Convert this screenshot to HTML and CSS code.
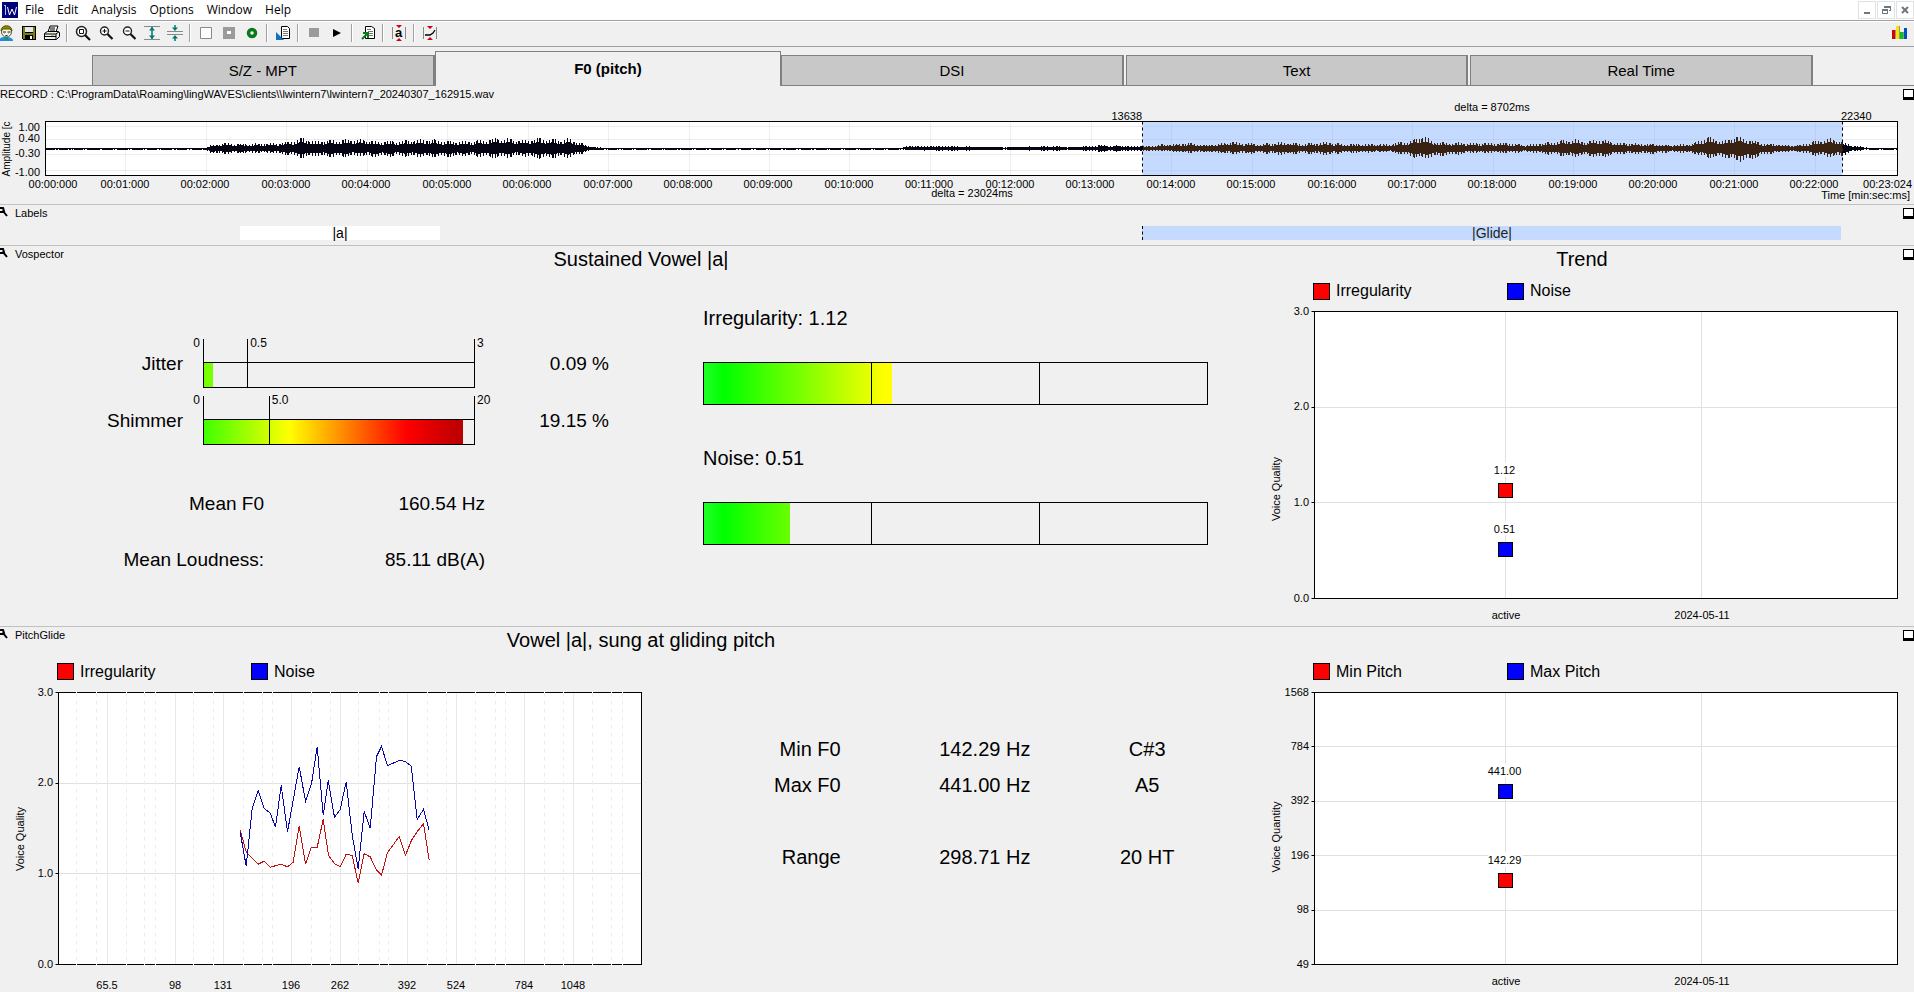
FILE: index.html
```html
<!DOCTYPE html>
<html lang="en">
<head>
<meta charset="utf-8">
<title>lingWAVES</title>
<link rel="stylesheet" href="styles.css">
</head>
<body>
<div class="app">
  <header class="menubar">
    <svg class="logo" width="16" height="16" viewBox="0 0 16 16" aria-label="lingWAVES" shape-rendering="crispEdges"><rect width="16" height="16" fill="#000078"/><path d="M3 3v10M2 3h2" stroke="#8fd0ff" fill="none"/><path d="M5.500 5l2 8 2.500-6 2.500 6 2-8" stroke="#fff" fill="none" shape-rendering="auto"/></svg>
    <nav class="menus">
      <button>File</button><button>Edit</button><button>Analysis</button><button>Options</button><button>Window</button><button>Help</button>
    </nav>
    <div class="window-buttons">
      <button aria-label="Minimize"><svg width="10" height="10" viewBox="0 0 10 10"><path d="M2 7h6v2H2z" fill="#6d7780"/></svg></button>
      <button aria-label="Restore"><svg width="10" height="10" viewBox="0 0 10 10" fill="none" stroke="#6d7780" shape-rendering="crispEdges"><path d="M3.500 3V1.500h6v4H8M3 2.500h6M1.500 4.500h5v4h-5zM1 5.500h6"/></svg></button>
      <button aria-label="Close"><svg width="10" height="10" viewBox="0 0 10 10"><path d="M2 2l6 6M8 2l-6 6" stroke="#6d7780" stroke-width="2"/></svg></button>
    </div>
  </header>

  <div class="toolbar" role="toolbar">
    <button class="first" aria-label="Client"><svg width="16" height="16" viewBox="0 0 16 16"><path d="M1 16c0-3 3-4 7-4s7 1 7 4z" fill="#1b8fd8"/><path d="M7 13h3l-1 3z" fill="#0aa02c"/><circle cx="8.500" cy="7" r="5" fill="#fff3d0" stroke="#555" /><path d="M3 6c0-7 11-7 11 0l-2-2H5z" fill="#8a8a00" stroke="#555500"/><path d="M5 7h3M9.500 7h3M7.500 10.500h2" stroke="#123" /><path d="M6 8h1M10 8h1" stroke="#2aa0e0"/></svg></button>
    <button aria-label="Save"><svg width="16" height="16" viewBox="0 0 16 16" shape-rendering="crispEdges"><path d="M1 1h14v14H2l-1-1z" fill="#000"/><path d="M2 2h2v6h8V2h2v12H2z" fill="#7b7b18"/><path d="M4 2h8v5H4z" fill="#e8e8e8"/><path d="M4 10h8v4H4z" fill="#000"/><path d="M9 11h2v3H9z" fill="#fff"/></svg></button>
    <button aria-label="Print"><svg width="18" height="16" viewBox="0 0 18 16"><path d="M5 7l2-6h8l-2 6" fill="#fff" stroke="#000"/><path d="M7 3h5M7 5h5" stroke="#000"/><path d="M1.500 8.500l3-2h11l1 1v4l-3 3h-12z" fill="#f0f0f0" stroke="#000"/><path d="M1.500 9h11l3.500-2M2 11.500h11M13 9v5" stroke="#000" fill="none"/><path d="M8 10.500h3" stroke="#e0d000"/></svg></button>
    <span class="sep"></span>
    <button aria-label="Zoom area"><svg width="16" height="16" viewBox="0 0 16 16"><circle cx="6.500" cy="6.500" r="5" fill="#fff" stroke="#222" stroke-width="1.500"/><path d="M4.500 4.500h4v4h-4z" fill="none" stroke="#111"/><path d="M10 10l5 5" stroke="#111" stroke-width="2.200"/></svg></button>
    <button aria-label="Zoom in"><svg width="16" height="16" viewBox="0 0 16 16"><circle cx="6.500" cy="6" r="4" fill="#fff" stroke="#222" stroke-width="1.400"/><path d="M4.500 6h4M6.500 4v4" stroke="#111"/><path d="M9.500 9l5 5" stroke="#111" stroke-width="2.200"/></svg></button>
    <button aria-label="Zoom out"><svg width="16" height="16" viewBox="0 0 16 16"><circle cx="6.500" cy="6" r="4" fill="#fff" stroke="#222" stroke-width="1.400"/><path d="M4.500 6h4" stroke="#111"/><path d="M9.500 9l5 5" stroke="#111" stroke-width="2.200"/></svg></button>
    <button aria-label="Expand amplitude"><svg width="16" height="16" viewBox="0 0 16 16"><path d="M0 1.500h16M0 14.500h16" stroke="#888"/><path d="M8 2v12" stroke="#007870" stroke-width="1.500"/><path d="M8 2l3 3.500H5zM8 14l3-3.500H5z" fill="#007870"/></svg></button>
    <button aria-label="Shrink amplitude"><svg width="16" height="16" viewBox="0 0 16 16"><path d="M0 6.500h16M0 9.500h16" stroke="#888"/><path d="M8 0v4M8 12v4" stroke="#007870" stroke-width="1.500"/><path d="M8 6L5 2.500h6zM8 10l-3 3.500h6z" fill="#007870"/></svg></button>
    <span class="sep"></span>
    <button aria-label="Clear"><svg width="16" height="16" viewBox="0 0 16 16"><path d="M2.500 2.500h11v11h-11z" fill="#fff" stroke="#8a8a8a"/></svg></button>
    <button aria-label="Marker"><svg width="16" height="16" viewBox="0 0 16 16"><path d="M2 2h12v12H2z" fill="#9b9b9b"/><path d="M6 6h4v3H6z" fill="#fff"/></svg></button>
    <button aria-label="Record"><svg width="16" height="16" viewBox="0 0 16 16"><circle cx="8" cy="8" r="3.500" fill="#fff" stroke="#0a7a1c" stroke-width="3.500"/></svg></button>
    <span class="sep"></span>
    <button aria-label="Import report"><svg width="16" height="16" viewBox="0 0 16 16"><path d="M6.500 1.500h6l2 2v10h-8z" fill="#fff" stroke="#000"/><path d="M8 4.500h4M8 6.500h5M8 8.500h5M8 10.500h5" stroke="#777"/><path d="M1 7v8h8z" fill="#1270c0"/></svg></button>
    <span class="sep"></span>
    <button aria-label="Stop"><svg width="16" height="16" viewBox="0 0 16 16"><path d="M3 3h10v9H3z" fill="#9b9b9b"/></svg></button>
    <button aria-label="Play"><svg width="16" height="16" viewBox="0 0 16 16"><path d="M4 4l8 4-8 4z" fill="#000"/></svg></button>
    <span class="sep"></span>
    <button aria-label="Export report"><svg width="16" height="16" viewBox="0 0 16 16"><path d="M5.500 1.500h6l3 2v10h-9z" fill="#fff" stroke="#000"/><path d="M7 4.500h4M8 6.500h5M9 8.500h4M9 10.500h4" stroke="#777"/><path d="M2 14l5-5M3 8h5v5" stroke="#0a7a1c" stroke-width="2" fill="none"/></svg></button>
    <span class="sep"></span>
    <button aria-label="Vowel analysis"><svg width="16" height="16" viewBox="0 0 16 16"><path d="M1.500 2v12M14.500 2v12" stroke="#888"/><path d="M5 0h6L8 3zM5 16h6l-3-3z" fill="#d00018"/><text x="4" y="12" class="icon-letter">a</text></svg></button>
    <span class="sep"></span>
    <button aria-label="Pitch analysis"><svg width="16" height="16" viewBox="0 0 16 16"><path d="M1.500 2v12M14.500 2v12" stroke="#888"/><path d="M5 1h6L8 4zM5 15h6l-3-3z" fill="#d00018"/><path d="M3 10h5l3-2 2-3" stroke="#000" stroke-width="1.300" fill="none"/></svg></button>
    <button class="last" aria-label="Spectrum"><svg width="16" height="16" viewBox="0 0 16 16" shape-rendering="crispEdges"><path d="M1 5h3v9H1z" fill="#d80000"/><path d="M5 1h3v13H5z" fill="#f4e400"/><path d="M9 7h3v7H9z" fill="#00c820"/><path d="M13 3h3v11h-3z" fill="#0050c0"/><path d="M4 5v9M8 1v13M12 7v7" stroke="#333" stroke-opacity=".5"/></svg></button>
  </div>

  <div class="tabs" role="tablist">
    <button role="tab">S/Z - MPT</button>
    <button role="tab" class="active" aria-selected="true">F0 (pitch)</button>
    <button role="tab">DSI</button>
    <button role="tab">Text</button>
    <button role="tab">Real Time</button>
  </div>

  <section class="record">
    <h2 class="path">RECORD : C:\ProgramData\Roaming\lingWAVES\clients\\lwintern7\lwintern7_20240307_162915.wav</h2>
    <button class="maximize" aria-label="Maximize record"></button>
    <div class="wave" id="wave"></div>
  </section>

  <section class="labels">
    <h2 class="pane-name"><svg class="wrench" width="8" height="10" viewBox="0 0 8 10"><path d="M0 1h3l1 3-2 1H0M3 4l4 5" stroke="#000" stroke-width="2" fill="none"/></svg>Labels</h2>
    <button class="maximize" aria-label="Maximize labels"></button>
    <div class="label-track">
      <span class="mark vowel">|a|</span>
      <span class="mark glide">|Glide|</span>
    </div>
  </section>

  <section class="panel vospector">
    <h2 class="pane-name"><svg class="wrench" width="8" height="10" viewBox="0 0 8 10"><path d="M0 1h3l1 3-2 1H0M3 4l4 5" stroke="#000" stroke-width="2" fill="none"/></svg>Vospector</h2>
    <button class="maximize" aria-label="Maximize Vospector"></button>
    <div class="titles"><h3 class="main-title">Sustained Vowel |a|</h3><h3>Trend</h3></div>
    <div class="body">
      <div class="measures">
        <div class="gauge-row">
          <span class="name">Jitter</span>
          <div class="gauge jitter"><span class="zero">0</span><div class="scale"><span class="tick">0.5</span><span class="end">3</span></div><div class="bar"><div class="fill" style="width:3.500%"></div></div></div>
          <span class="value">0.09 %</span>
        </div>
        <div class="gauge-row">
          <span class="name">Shimmer</span>
          <div class="gauge shimmer"><span class="zero">0</span><div class="scale"><span class="tick">5.0</span><span class="end">20</span></div><div class="bar"><div class="fill" style="width:96%"></div></div></div>
          <span class="value">19.15 %</span>
        </div>
        <dl class="means">
          <dt>Mean F0</dt><dd>160.54 Hz</dd>
          <dt>Mean Loudness:</dt><dd>85.11 dB(A)</dd>
        </dl>
      </div>
      <div class="quality">
        <p>Irregularity: 1.12</p>
        <div class="thirds"><div class="fill" style="width:37.400%"></div><i></i><i></i><i></i></div>
        <p>Noise: 0.51</p>
        <div class="thirds"><div class="fill" style="width:17%"></div><i></i><i></i><i></i></div>
      </div>
      <figure class="chart-box">
        <figcaption class="legend trend"><span class="red">Irregularity</span><span class="blue">Noise</span></figcaption>
        <div class="chart" id="trend-quality"></div>
      </figure>
    </div>
  </section>

  <section class="panel pitchglide">
    <h2 class="pane-name"><svg class="wrench" width="8" height="10" viewBox="0 0 8 10"><path d="M0 1h3l1 3-2 1H0M3 4l4 5" stroke="#000" stroke-width="2" fill="none"/></svg>PitchGlide</h2>
    <button class="maximize" aria-label="Maximize PitchGlide"></button>
    <div class="titles"><h3 class="main-title">Vowel |a|, sung at gliding pitch</h3></div>
    <div class="body">
      <figure class="chart-box">
        <figcaption class="legend"><span class="red">Irregularity</span><span class="blue">Noise</span></figcaption>
        <div class="chart" id="glide"></div>
      </figure>
      <div class="range-box">
        <table class="range">
          <tr><th>Min F0</th><td>142.29 Hz</td><td class="note">C#3</td></tr>
          <tr><th>Max F0</th><td>441.00 Hz</td><td class="note">A5</td></tr>
          <tr class="total"><th>Range</th><td>298.71 Hz</td><td class="note">20 HT</td></tr>
        </table>
      </div>
      <figure class="chart-box">
        <figcaption class="legend trend"><span class="red">Min Pitch</span><span class="blue">Max Pitch</span></figcaption>
        <div class="chart" id="trend-pitch"></div>
      </figure>
    </div>
  </section>
</div>
<script src="charts.js"></script>
</body>
</html>
```
FILE: styles.css
```css
* { box-sizing: border-box; }
body { margin: 0; background: #f0f0f0; color: #000; font-family: "Liberation Sans", Arial, sans-serif; font-size: 11px; }
button { font: inherit; color: inherit; border: 0; padding: 0; background: none; }
h2, h3, p, dl, dd, figure { margin: 0; font-weight: normal; }
svg { display: block; }
.app { display: flex; flex-direction: column; min-height: 100vh; overflow: hidden; }

.menubar { display: flex; align-items: center; height: 21px; background: #fff; border-bottom: 1px solid #a0a0a0; padding-left: 2px; }
.menus { display: flex; gap: 13px; margin-left: 7px; font-family: "Open Sans", "Noto Sans", sans-serif; font-size: 12px; line-height: 18px; }
.window-buttons { display: flex; gap: 1px; margin-left: auto; }
.window-buttons button { display: grid; place-items: center; width: 18px; height: 18px; border: 1px solid #e2e2e2; }

.toolbar { display: flex; align-items: center; height: 26px; padding-bottom: 2px; border-top: 1px solid #fff; border-bottom: 1px solid #a0a0a0; }
.toolbar button { display: grid; place-items: center; width: 23px; height: 22px; flex: none; }
.toolbar .first { margin-left: -6px; }
.toolbar .last { margin-left: auto; margin-right: 4px; }
.sep { flex: none; width: 2px; height: 18px; margin: 0 3px; border-left: 1px solid #a0a0a0; border-right: 1px solid #fff; }
.icon-letter { font-size: 13px; font-weight: bold; }

.tabs { display: flex; align-items: flex-end; height: 39px; padding: 0 99px 0 92px; border-bottom: 1px solid #808080; font-size: 15px; }
.tabs button { flex: 343 1 0; height: 30px; background: #c8c8c8; border: 1px solid #808080; border-right-width: 2px; border-bottom: 0; }
.tabs button:nth-child(n + 3) { margin-right: 2px; }
.tabs .active { flex-grow: 348; height: 35px; margin-bottom: -1px; padding-bottom: 2px; background: #f0f0f0; border-right-width: 1px; font-weight: bold; }

.record, .labels, .panel { position: relative; }
.record { height: 118px; }
.path { position: absolute; left: 0; top: 2px; font-size: 11px; line-height: 13px; }
.wave { height: 118px; }
.maximize { position: absolute; right: 0; top: 3px; width: 11px; height: 11px; border: 1px solid #000; border-bottom-width: 3px; background: #fff; }
.wave svg, .chart svg { overflow: visible; }

.labels { height: 41px; border-top: 1px solid #c0c0c0; }
.pane-name { position: absolute; left: 0; top: 2px; display: flex; gap: 7px; font-size: 11px; line-height: 13px; }
.label-track { display: grid; grid-template-columns: 240fr 200fr 702fr 699fr 73fr; padding-top: 21px; font-size: 14px; line-height: 14px; text-align: center; }
.mark { height: 14px; }
.vowel { grid-column: 2; background: #fff; }
.glide { grid-column: 4; background: #c4dbff; border-left: 1px dashed #000; color: #222; }

.panel { display: flex; flex-direction: column; border-top: 1px solid #c0c0c0; }
.vospector { flex: 381 1 0; }
.pitchglide { flex: 366 1 0; }
.titles, .body { display: grid; grid-template-columns: 690fr 560fr 664fr; }
.titles { height: 28px; padding-top: 2px; font-size: 20px; line-height: 22px; text-align: center; }
.titles h3 { font-size: 20px; }
.main-title { grid-column: 1 / 3; padding-left: 32px; }
.body { flex: 1; }

.measures { padding-top: 65px; font-size: 19px; line-height: 24px; }
.gauge-row { display: grid; grid-template-columns: 183fr 20fr 272fr 134fr 81fr; align-items: center; margin-bottom: 8px; }
.name, .value { text-align: right; }
.gauge { grid-column: 3; position: relative; height: 49px; font-size: 12px; line-height: 8px; }
.zero { position: absolute; right: 100%; padding-right: 3px; }
.scale { position: absolute; inset: 0; z-index: 1; border: solid #000; border-width: 0 1px; }
.tick { position: absolute; top: 0; bottom: 0; border-left: 1px solid #000; padding-left: 2px; }
.jitter .tick { left: 16%; }
.shimmer .tick { left: 24%; }
.end { position: absolute; left: 100%; padding-left: 3px; }
.bar { position: absolute; left: 0; right: 0; bottom: 0; height: 26px; border: 1px solid #000; }
.bar .fill { height: 100%; }
.jitter .fill { background: #78ff00; }
.shimmer .fill { background: linear-gradient(90deg, #40ff00, #ff0 33%, #f00 78%, #b80000); }
.means { display: grid; grid-template-columns: 264fr 221fr 205fr; padding-top: 23px; line-height: 56px; text-align: right; }
.means dt { grid-column: 1; }
.means dd { grid-column: 2; }

.quality { padding: 32px 42px 0 13px; font-size: 20px; line-height: 24px; }
.thirds { position: relative; display: grid; grid-template-columns: repeat(3, 1fr); height: 43px; margin: 32px 0 41px; border: 1px solid #000; border-right: 0; }
.thirds i { position: relative; border-right: 1px solid #000; }
.thirds .fill { position: absolute; inset: 0 auto 0 0; background: linear-gradient(90deg, #20ff28, #0f0 20px, #ff0 180px); }

.chart-box { display: flex; flex-direction: column; }
.legend { display: flex; align-items: center; height: 34px; padding-left: 57px; font-size: 16px; line-height: 20px; }
.legend.trend { padding-left: 63px; }
.legend span { display: flex; align-items: center; gap: 6px; width: 194px; }
.legend span::before { content: ""; width: 15px; height: 15px; border: 1px solid #000; background: #f00; }
.legend .blue::before { background: #00f; }
.chart { position: relative; flex: 1; min-height: 200px; }
.chart svg { position: absolute; inset: 0; }

.range-box { padding: 76px 2px 0 0; }
.range { width: 100%; border-collapse: collapse; table-layout: fixed; font-size: 20px; line-height: 36px; text-align: right; }
.range th, .range td { padding: 0; font-weight: normal; text-align: right; }
.range th { width: 27%; }
.range td { width: 34%; }
.range td.note { width: 39%; text-align: center; padding-left: 16px; }
.range .total { line-height: 108px; }

@media (max-width: 1000px) {
  .menus { gap: 8px; }
  .titles, .body { grid-template-columns: 1fr; }
  .titles { height: auto; }
  .main-title { grid-column: 1; }
  .vospector, .pitchglide { flex: none; }
}
```
FILE: charts.js
```js
const NS = "http://www.w3.org/2000/svg";

function canvas(host) {
  host.textContent = "";
  const w = host.clientWidth, h = host.clientHeight;
  const svg = document.createElementNS(NS, "svg");
  svg.setAttribute("width", w);
  svg.setAttribute("height", h);
  svg.setAttribute("font-size", 11);
  host.appendChild(svg);
  const add = (tag, attrs, text) => {
    const el = document.createElementNS(NS, tag);
    for (const key in attrs) el.setAttribute(key, attrs[key]);
    if (text !== undefined) el.textContent = text;
    svg.appendChild(el);
    return el;
  };
  const snap = v => Math.floor(v) + 0.5;
  return {
    w, h, add, snap,
    hline: (x1, x2, y, stroke, extra) => add("path", { d: `M${x1} ${snap(y)}H${x2}`, stroke, ...extra }),
    vline: (x, y1, y2, stroke, extra) => add("path", { d: `M${snap(x)} ${y1}V${y2}`, stroke, ...extra }),
    text: (x, y, str, anchor = "middle") => add("text", { x: Math.round(x), y: Math.round(y) + 4, "text-anchor": anchor }, str),
    vtext: (x, y, str, size = 11) => add("text", { transform: `translate(${x + 4} ${Math.round(y)}) rotate(-90)`, "text-anchor": "middle", "font-size": size }, str)
  };
}

/* time in seconds, peak above and below the axis in pixels */
const envelope = [
  [0, 0, 1], [1.98, 0, 1], [2.05, 3, 4], [2.2, 5, 5], [2.5, 4, 4], [2.8, 5, 4], [3.0, 6, 6], [3.2, 10, 9], [3.35, 7, 7],
  [3.6, 8, 8], [3.9, 9, 7], [4.1, 7, 8], [4.4, 7, 7], [4.7, 9, 8], [5, 7, 8], [5.3, 7, 7], [5.65, 10, 9], [5.9, 8, 7],
  [6.2, 10, 10], [6.4, 8, 8], [6.5, 10, 9], [6.65, 5, 5], [6.8, 1, 1], [7, 0, 1], [10.6, 0, 1], [10.7, 2, 1],
  [11.2, 2, 2], [11.9, 1, 1], [12.6, 2, 2], [12.7, 1, 1], [13.1, 3, 3], [13.64, 2, 2], [13.8, 3, 2], [14.2, 5, 4],
  [14.4, 3, 3], [14.75, 6, 5], [15.1, 4, 4], [15.4, 6, 6], [15.6, 4, 4], [15.95, 6, 6], [16.1, 4, 4], [16.7, 4, 3],
  [17, 8, 8], [17.12, 13, 10], [17.25, 6, 8], [17.7, 5, 4], [18.2, 5, 4], [18.4, 3, 3], [19, 9, 8], [19.15, 6, 6],
  [19.3, 9, 9], [19.55, 5, 5], [20, 4, 5], [20.2, 3, 3], [20.5, 5, 5], [20.65, 11, 9], [20.85, 7, 8], [21.02, 12, 12],
  [21.15, 9, 12], [21.35, 5, 6], [21.6, 3, 3], [21.8, 3, 3], [21.95, 6, 6], [22.2, 10, 8], [22.34, 6, 7],
  [22.45, 3, 3], [22.6, 1, 1], [22.7, 0, 1], [23.024, 0, 1]
];

function drawWave() {
  const c = canvas(document.getElementById("wave"));
  const left = 45.5, right = c.w - 16.5, top = 35.5, bottom = 89.5, axis = 62, total = 23.024;
  const x = t => left + (right - left) * t / total;
  const selA = x(13.638), selB = x(22.34);
  c.add("rect", { x: left, y: top, width: right - left, height: bottom - top, fill: "#fff" });
  c.add("rect", { x: selA, y: top, width: selB - selA, height: bottom - top, fill: "#c4dbff" });
  const grid = (line, a, b, at, o) => c[line](at, a, b, "#402040", { "stroke-opacity": o });
  [40, 53, 68, 84].forEach(y => {
    c.hline(left, selA, y, "#000", { "stroke-opacity": 0.07 });
    c.hline(selA, selB, y, "#604080", { "stroke-opacity": 0.06 });
    c.hline(selB, right, y, "#000", { "stroke-opacity": 0.07 });
  });
  for (let s = 1; s < 23; s++) grid("vline", top, bottom, x(s), s < 14 ? 0.08 : 0.06);
  let k = 0, out = "", outSel = "";
  for (let px = Math.ceil(left); px < right; px++) {
    const t = (px - left) / (right - left) * total;
    while (k < envelope.length - 2 && envelope[k + 1][0] < t) k++;
    const [t0, u0, d0] = envelope[k], [t1, u1, d1] = envelope[k + 1];
    const f = (t - t0) / (t1 - t0);
    const vary = 0.9 + 0.15 * Math.sin(px * 12.9898);
    const reach = px % 3 === 0 || px % 7 === 0 ? 1 : 0.6;
    const up = Math.round((u0 + (u1 - u0) * f) * vary * reach);
    const down = Math.round((d0 + (d1 - d0) * f) * vary * reach);
    const seg = `M${px + 0.5} ${axis - up}V${axis + 1 + down}`;
    if (px > selA && px < selB) outSel += seg; else out += seg;
  }
  c.add("path", { d: out, stroke: "#050514" });
  c.add("path", { d: outSel, stroke: "#3a2212" });
  c.add("rect", { x: left, y: top, width: Math.floor(right - left), height: bottom - top, fill: "none", stroke: "#000" });
  c.vline(selA, top, bottom, "#000", { "stroke-dasharray": "3 3" });
  c.vline(selB, top, bottom, "#000", { "stroke-dasharray": "3 3" });
  [["1.00", 41], ["0.40", 52], ["-0.30", 67], ["-1.00", 86]].forEach(([s, y]) => c.text(40, y, s, "end"));
  for (let s = 0; s < 23; s++) c.text(s ? x(s) - 1 : 53, 98, `00:${String(s).padStart(2, "0")}:000`);
  c.text(c.w - 2, 98, "00:23:024", "end");
  c.text(c.w - 4, 109, "Time [min:sec:ms]", "end");
  c.text((left + right) / 2, 107, "delta = 23024ms");
  c.text((selA + selB) / 2, 21, "delta = 8702ms");
  c.text(selA - 1, 30, "13638", "end");
  c.text(selB - 1, 30, "22340", "start");
  c.vtext(6, 63, "Amplitude [c", 10);
}

function drawFrame(c, p, yTicks, title, titleY) {
  c.add("rect", { x: p.l, y: p.t, width: p.r - p.l, height: p.b - p.t, fill: "#fff" });
  const y = f => p.b - (p.b - p.t) * f;
  yTicks.forEach(([label, f]) => {
    if (f > 0 && f < 1) c.hline(p.l, p.r, y(f), "#e0e0e0");
    c.hline(p.l - 3, p.l, y(f), "#000");
    c.text(p.l - 6, y(f) - 1, label, "end");
  });
  c.vtext(p.title, p.t + (p.b - p.t) * titleY, title, 11);
  return y;
}

function border(c, p) {
  c.add("rect", { x: p.l, y: p.t, width: p.r - p.l, height: p.b - p.t, fill: "none", stroke: "#000" });
}

function drawTrend(id, yTicks, title, titleY, points) {
  const c = canvas(document.getElementById(id));
  const p = { l: 64.5, r: Math.floor(c.w - 17) + 0.5, t: 3.5, b: Math.floor(c.h - 28) + 0.5, title: 26 };
  const y = drawFrame(c, p, yTicks, title, titleY);
  const x1 = p.l + (p.r - p.l) * 0.328, x2 = p.l + (p.r - p.l) * 0.664;
  c.vline(x1, p.t, p.b, "#e0e0e0");
  c.vline(x2, p.t, p.b, "#e0e0e0");
  border(c, p);
  points.forEach(([label, f, fill]) => {
    const cx = c.snap(x1), cy = c.snap(y(f));
    c.add("rect", { x: cx - 17, y: cy - 28, width: 34, height: 14, fill: "#fff" });
    c.add("rect", { x: cx - 7, y: cy - 7, width: 14, height: 14, fill, stroke: "#000" });
    c.add("text", { x: cx - 1, y: cy - 17, "text-anchor": "middle" }, label);
  });
  c.text(x1, p.b + 16, "active");
  c.text(x2, p.b + 16, "2024-05-11");
}

/* traces are sampled on a 1749 x 819 raster of the plot area */
const noise = [[545,421],[563,523],[581,349],[599,295],[617,349],[635,363],[651,405],[668,280],[687,420],[704,324],[722,223],[741,327],[759,275],[776,163],[794,370],[809,265],[828,376],[845,352],[863,269],[881,429],[899,531],[917,358],[935,409],[954,193],[969,163],[987,220],[1024,204],[1041,208],[1058,222],[1076,382],[1095,352],[1112,415]];
const irregularity = [[545,415],[563,480],[599,517],[617,508],[635,526],[668,517],[687,525],[704,511],[722,403],[741,517],[758,467],[776,466],[794,382],[810,491],[828,515],[845,525],[863,487],[881,491],[899,574],[917,485],[935,495],[954,535],[969,550],[987,482],[1022,434],[1041,490],[1059,445],[1076,419],[1095,395],[1112,505]];
const octaves = [["65.5", 49], ["98", 117], ["131", 165], ["196", 233], ["262", 282], ["392", 349], ["524", 398], ["784", 466], ["1048", 515]];
const semitones = [18, 38, 68, 86, 97, 135, 155, 185, 204, 214, 253, 272, 300, 321, 330, 369, 388, 417, 437, 447, 486, 505, 534, 553, 564];

function drawGlide() {
  const c = canvas(document.getElementById("glide"));
  const p = { l: 58.5, r: Math.floor(c.w - 49) + 0.5, t: 3.5, b: Math.floor(c.h - 28) + 0.5, title: 20 };
  drawFrame(c, p, [["3.0", 1], ["2.0", 0.6667], ["1.0", 0.3333], ["0.0", 0]], "Voice Quality", 0.54);
  const x = u => p.l + (p.r - p.l) * u / 583;
  semitones.forEach(u => c.vline(x(u), p.t, p.b, "#ececec", { "stroke-dasharray": "4 4" }));
  octaves.forEach(([label, u]) => {
    c.vline(x(u), p.t, p.b, "#e8e8e8");
    c.text(x(u) - 1, p.b + 20, label);
  });
  border(c, p);
  semitones.forEach(u => [p.t, p.b].forEach(y => c.vline(x(u), y - 1, y + 1, "#fff")));
  const trace = (data, stroke) => c.add("polyline", {
    points: data.map(([a, b]) => `${(x(a / 3)).toFixed(1)},${(p.t + (p.b - p.t) * b / 819).toFixed(1)}`).join(" "),
    fill: "none", stroke, "shape-rendering": "crispEdges"
  });
  trace(irregularity, "#c01010");
  trace(noise, "#0808a8");
}

function draw() {
  drawWave();
  drawTrend("trend-quality", [["3.0", 1], ["2.0", 0.6667], ["1.0", 0.3333], ["0.0", 0]], "Voice Quality", 0.62,
    [["1.12", 0.375, "#f00"], ["0.51", 0.17, "#00f"]]);
  drawGlide();
  drawTrend("trend-pitch", [["1568", 1], ["784", 0.8], ["392", 0.6], ["196", 0.4], ["98", 0.2], ["49", 0]], "Voice Quantity", 0.53,
    [["441.00", 0.635, "#00f"], ["142.29", 0.307, "#f00"]]);
}

draw();
window.addEventListener("resize", draw);
```
